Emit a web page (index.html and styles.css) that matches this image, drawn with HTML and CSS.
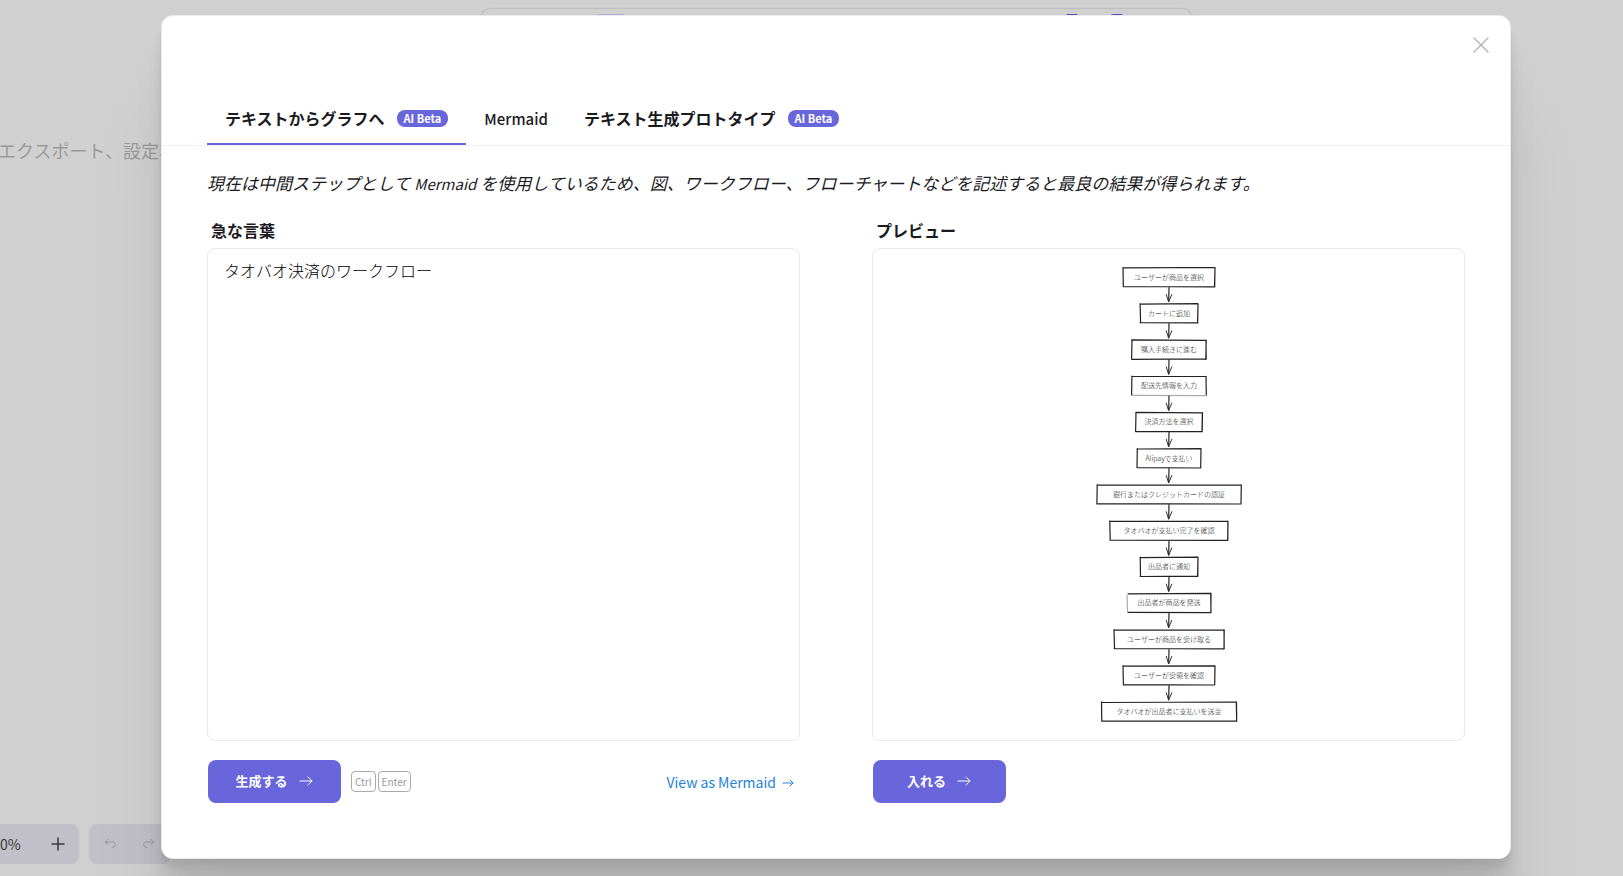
FILE: index.html
```html
<!DOCTYPE html>
<html lang="ja">
<head>
<meta charset="utf-8">
<title>テキストからグラフへ</title>
<link rel="stylesheet" href="styles.css">
</head>
<body>
<div class="canvas" aria-hidden="true">
  <div class="toolbar"><span class="tool-active"></span><span class="tool-dot"></span><span class="tool-dot"></span></div>
  <p class="hint">エクスポート、設定、</p>
  <div class="bottom-bar">
    <div class="zoom-group"><span>0%</span>
      <svg class="plus" width="14" height="14" viewBox="0 0 14 14"><path d="M7 1v12M1 7h12"/></svg>
    </div>
    <div class="history-group">
      <svg width="16" height="16" viewBox="0 0 20 20"><path d="M7.500 10.800 4.200 7.500l3.300-3.300M4.200 7.500h9.200a3.300 3.300 0 0 1 0 6.700h-.9"/></svg>
      <svg width="16" height="16" viewBox="0 0 20 20"><path d="M12.500 10.800l3.300-3.300-3.300-3.300M15.800 7.500H6.600a3.300 3.300 0 0 0 0 6.700h.9"/></svg>
    </div>
  </div>
</div>
<div class="overlay">
  <main class="modal" role="dialog" aria-modal="true" aria-label="テキストからグラフへ">
    <button class="close" type="button" aria-label="閉じる">
      <svg width="18" height="18" viewBox="0 0 18 18"><path d="M2 2l14 14M16 2 2 16"/></svg>
    </button>
    <div class="tabs" role="tablist">
      <button class="tab tab-selected" type="button" role="tab" aria-selected="true">テキストからグラフへ<span class="badge">AI Beta</span></button>
      <button class="tab tab-latin" type="button" role="tab" aria-selected="false">Mermaid</button>
      <button class="tab" type="button" role="tab" aria-selected="false">テキスト生成プロトタイプ<span class="badge">AI Beta</span></button>
    </div>
    <div class="content">
      <p class="description">現在は中間ステップとして <span class="latin">Mermaid</span> を使用しているため、図、ワークフロー、フローチャートなどを記述すると最良の結果が得られます。</p>
      <div class="panels">
        <section class="panel">
          <label class="panel-label" for="prompt">急な言葉</label>
          <textarea class="box prompt" id="prompt">タオバオ決済のワークフロー</textarea>
          <div class="actions">
            <button class="primary" type="button">生成する
              <svg width="16" height="16" viewBox="0 0 16 16"><path d="M2 8h12M10 4l4 4-4 4"/></svg>
            </button>
            <span class="keys"><kbd>Ctrl</kbd><kbd>Enter</kbd></span>
            <a class="link" href="#">View as Mermaid
              <svg width="14" height="14" viewBox="0 0 14 14"><path d="M2 8h10M9 5l3 3-3 3"/></svg>
            </a>
          </div>
        </section>
        <section class="panel">
          <h2 class="panel-label">プレビュー</h2>
          <div class="box preview">
            <svg class="chart" width="148" height="456" viewBox="0 1 148 456" role="img" aria-label="タオバオ決済のワークフロー">
              <defs>
                <g id="arrow"><path d="M74 20 73.700 34"/><path class="barb" d="M71.300 27 73.600 34.500 76.800 27"/></g>
              </defs>
              <g transform="translate(0 1.500)"><path d="M28 .4 120 0 119.700 19.400 28.200 19M28 0 28.300 19.200M120 .3 119.500 19"/><text x="74" y="12">ユーザーが商品を選択</text><use href="#arrow"/></g>
              <g transform="translate(0 37.700)"><path d="M45.300.5 103-.1 102.600 19.200 45 19M45.100 0 45.600 19.300M103 1 102.700 19.400"/><text x="74" y="12">カートに追加</text><use href="#arrow"/></g>
              <g transform="translate(0 73.900)"><path d="M36.600 0 111 .5 111.200 19 36.800 19.400M37 .3 36.600 19.100M111.200.2 110.800 19.500"/><text x="74" y="12">購入手続きに進む</text><use href="#arrow"/></g>
              <g transform="translate(0 110.100)"><path d="M37 .2 111.200.4M36.900 0 36.600 19.200M111 .3 111.300 19"/><path class="faint" d="M36.800 19.300 111 19.600"/><text x="74" y="12">配送先情報を入力</text><use href="#arrow"/></g>
              <g transform="translate(0 146.300)"><path d="M40.700 0 107.500.5 107.200 19.400 40.900 19M41 .2 40.600 19.300M107.400.2 107 19.200"/><text x="74" y="12">決済方法を選択</text><use href="#arrow"/></g>
              <g transform="translate(0 182.500)"><path d="M42 .5 105.800.1M42.300 0 42 19.200M106 .2 105.700 19.400M42 19.200 105.800 19.500"/><text x="74" y="12">Alipayで支払い</text><use href="#arrow"/></g>
              <g transform="translate(0 218.700)"><path d="M2 .3 146.300.5 146 19.300 2.200 19M2.200 0 1.900 19.200M146.300.2 146 19.200"/><text x="74" y="12">銀行またはクレジットカードの認証</text><use href="#arrow"/></g>
              <g transform="translate(0 254.900)"><path d="M14.600.2 132.900.4 132.700 19.400 15 19.200M14.800 0 15.200 19.200M133 .3 132.800 19.200"/><text x="74" y="12">タオバオが支払い完了を確認</text><use href="#arrow"/></g>
              <g transform="translate(0 291.100)"><path d="M45.200.5 103 0 102.800 19.100 45.100 19.400M45.200 0 45.500 19.300M103 .2 102.600 19.300"/><text x="74" y="12">出品者に通知</text><use href="#arrow"/></g>
              <g transform="translate(0 327.300)"><path d="M33 .5 116 .1 115.900 19.300 32.500 19M115.700 0 116 19.200"/><path class="faint" d="M32 2 32.600 19.200"/><text x="74" y="12">出品者が商品を発送</text><use href="#arrow"/></g>
              <g transform="translate(0 363.500)"><path d="M19 .3 129.200.6 129 19.300 19.200 19M19 0 19.500 19.200M129 .2 129.200 19.200"/><text x="74" y="12">ユーザーが商品を受け取る</text><use href="#arrow"/></g>
              <g transform="translate(0 399.700)"><path d="M28 .5 120 .1 119.700 19.300 28.400 19M28 0 28.400 19.300M120 1 119.700 19.200"/><text x="74" y="12">ユーザーが受領を確認</text><use href="#arrow"/></g>
              <g transform="translate(0 435.900)"><path d="M6.500.6 141.500.1 141.700 19.200 6.600 19M6.500 0 6.800 19.200M141.300.2 141.700 19.400"/><text x="74" y="12">タオバオが出品者に支払いを送金</text></g>
            </svg>
          </div>
          <div class="actions">
            <button class="primary" type="button">入れる
              <svg width="16" height="16" viewBox="0 0 16 16"><path d="M2 8h12M10 4l4 4-4 4"/></svg>
            </button>
          </div>
        </section>
      </div>
    </div>
  </main>
</div>
</body>
</html>
```
FILE: styles.css
```css
* {
  box-sizing: border-box;
}

body {
  margin: 0;
  height: 100vh;
  overflow: hidden;
  background: #d0d0d0;
  color: #1b1b1f;
  font-family: "Noto Sans CJK JP", "Noto Sans", sans-serif;
  font-size: 16px;
  line-height: 24px;
}

button {
  font-family: inherit;
  cursor: pointer;
}

svg {
  fill: none;
  stroke: currentColor;
  stroke-linecap: round;
  stroke-linejoin: round;
}

/* Dimmed editor behind the dialog */
.canvas {
  position: absolute;
  inset: 0;
  overflow: hidden;
}

.toolbar {
  display: flex;
  width: 709px;
  height: 48px;
  margin: 9px auto 0 482px;
  padding: 5px 68px 0 114px;
  gap: 33px;
  border-radius: 8px;
  box-shadow: 0 0 2px rgba(0, 0, 0, 0.3);
}

.tool-active {
  width: 30px;
  height: 30px;
  margin-right: auto;
  border-radius: 4px;
  background: #b0acd2;
}

.tool-dot {
  width: 12px;
  height: 12px;
  border-radius: 2px;
  background: #5650b4;
}

.hint {
  position: absolute;
  top: 138px;
  left: -2px;
  margin: 0;
  color: #999;
  font-size: 18px;
  white-space: nowrap;
}

.bottom-bar {
  position: absolute;
  bottom: 12px;
  left: 0;
  display: flex;
  gap: 10px;
  color: #38383c;
  font-size: 14px;
}

.zoom-group,
.history-group {
  display: flex;
  align-items: center;
  height: 40px;
  border-radius: 8px;
  background: #c1c0c8;
}

.zoom-group {
  justify-content: space-between;
  width: 79px;
  padding-right: 14px;
  border-top-left-radius: 0;
  border-bottom-left-radius: 0;
}

.history-group {
  width: 82px;
  padding-left: 13px;
  gap: 23px;
  color: #8e8e94;
}

.plus {
  stroke-width: 1.5;
}

.overlay {
  position: relative;
  display: flex;
  height: 100%;
  padding: 15px 112px 17px 161px;
}

.modal {
  position: relative;
  display: flex;
  flex: 1;
  flex-direction: column;
  min-width: 0;
  padding-top: 80px;
  border: 1px solid #ebebeb;
  border-radius: 12px;
  background: #fff;
  box-shadow:
    0 100px 80px rgba(0, 0, 0, 0.07),
    0 42px 33px rgba(0, 0, 0, 0.05),
    0 22px 18px rgba(0, 0, 0, 0.04),
    0 12px 10px rgba(0, 0, 0, 0.04),
    0 7px 5px rgba(0, 0, 0, 0.03),
    0 3px 2px rgba(0, 0, 0, 0.02);
}

.close {
  position: absolute;
  top: 20px;
  right: 20px;
  display: flex;
  padding: 0;
  border: 0;
  background: none;
  color: #b8b8b8;
}

.close svg {
  stroke-width: 1.5;
}

.tabs {
  display: flex;
  padding: 0 45px;
  border-bottom: 1px solid #f1f0f8;
}

.tab {
  display: flex;
  align-items: center;
  height: 49px;
  padding: 0 18px 5px;
  gap: 12px;
  border: 0;
  background: none;
  color: inherit;
  font-size: 16px;
  font-weight: 700;
  white-space: nowrap;
}

.tab-latin {
  font-size: 15px;
  font-weight: 500;
}

.tab-selected {
  box-shadow: inset 0 -2px #6965db;
}

.badge {
  padding: 0 7px;
  border-radius: 8px;
  background: #6965db;
  color: #fff;
  font-size: 11px;
  line-height: 17px;
}

.content {
  display: flex;
  flex: 1;
  flex-direction: column;
  min-height: 0;
  padding: 25px 45px 54px;
}

.description {
  margin: 0;
  font-size: 17px;
  font-style: italic;
}

.latin {
  font-size: 15px;
  line-height: 16px;
}

.panels {
  display: grid;
  flex: 1;
  grid-template-columns: 1fr 1fr;
  gap: 72px;
  min-height: 0;
  margin-top: 23px;
}

.panel {
  display: flex;
  flex-direction: column;
  min-width: 0;
  min-height: 0;
}

.panel-label {
  margin: 0;
  padding: 0 4px 6px;
  font-size: 16px;
  font-weight: 700;
}

.box {
  flex: 1;
  min-height: 0;
  border: 1px solid #e8e8ea;
  border-radius: 8px;
  background: #fff;
}

.prompt {
  width: 100%;
  padding: 9px 16px;
  color: #000;
  font-family: inherit;
  font-size: 16px;
  font-weight: 300;
  line-height: 24px;
  resize: none;
}

.preview {
  display: flex;
  align-items: center;
  justify-content: center;
}

.chart path {
  stroke: #222;
  stroke-width: 1.2;
}

.chart .barb {
  stroke: #333;
  stroke-width: 1;
}

.chart .faint {
  stroke: #aaa;
}

.chart text {
  fill: #111;
  stroke: none;
  font-size: 7px;
  font-weight: 300;
  text-anchor: middle;
}

.actions {
  display: flex;
  align-items: center;
  height: 63px;
  padding: 18px 5px 0 1px;
}

.primary {
  display: flex;
  align-items: center;
  justify-content: center;
  width: 133px;
  height: 43px;
  padding: 0 6px 2px;
  gap: 10px;
  border: 0;
  border-radius: 8px;
  background: #6965db;
  color: #fff;
  font-size: 13px;
  font-weight: 700;
}

.keys {
  display: flex;
  gap: 2px;
  margin-left: 10px;
}

kbd {
  padding: 0 3px;
  border: 1px solid #aaa;
  border-radius: 4px;
  color: #999;
  font-family: inherit;
  font-size: 10px;
  line-height: 19px;
}

.link {
  display: flex;
  align-items: center;
  margin-left: auto;
  gap: 5px;
  color: #2382d8;
  font-size: 14px;
  text-decoration: none;
}
```
